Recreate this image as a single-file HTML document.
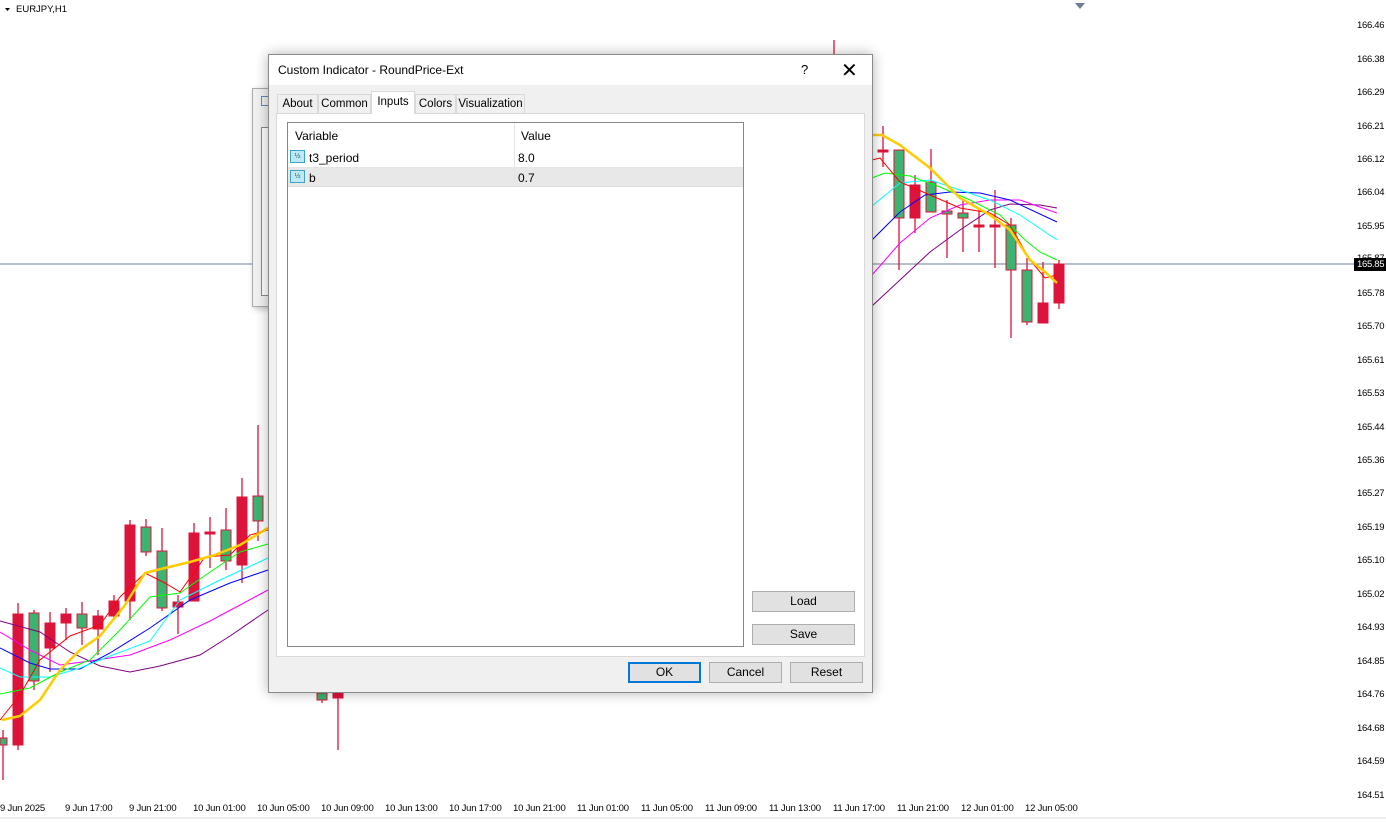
<!DOCTYPE html>
<html><head><meta charset="utf-8"><style>
*{margin:0;padding:0;box-sizing:border-box}
body{width:1386px;height:822px;background:#fff;position:relative;overflow:hidden;font-family:"Liberation Sans",Tahoma,sans-serif}
.ax{position:absolute;left:1357px;font-size:9.5px;letter-spacing:-0.3px;color:#000}
.tm{position:absolute;top:803px;font-size:9.5px;letter-spacing:-0.2px;color:#000;white-space:nowrap}
.abs{position:absolute}
.btn{position:absolute;background:#e1e1e1;border:1px solid #adadad;font-size:12px;text-align:center;line-height:19px;color:#000}
.tab{position:absolute;top:94px;height:19px;border:1px solid #d9d9d9;border-bottom:none;background:#f0f0f0;font-size:11.5px;line-height:18px;text-align:center;color:#000;white-space:nowrap}
.ic{position:absolute;width:15px;height:13px;background:#bfe8f2;border:1px solid #3aa6c4;font-size:7px;line-height:11px;color:#1a5f80;text-align:center}
</style></head><body>
<svg class="abs" style="left:0;top:0" width="1386" height="822">
<line x1="0" y1="264" x2="1356" y2="264" stroke="#6b7f99" stroke-width="1"/>
<line x1="0" y1="818" x2="1386" y2="818" stroke="#ddd"/>
<polygon points="1075,3 1085,3 1080,9" fill="#6b7f99"/>
<polygon points="5,8 10,8 7.5,11" fill="#000"/>
<g stroke="#dc143c" stroke-width="1.3">
<line x1="3" y1="730" x2="3" y2="780"/><line x1="18" y1="603" x2="18" y2="750"/><line x1="34" y1="610" x2="34" y2="690"/><line x1="50" y1="612" x2="50" y2="672"/><line x1="66" y1="608" x2="66" y2="640"/><line x1="82" y1="602" x2="82" y2="645"/><line x1="98" y1="610" x2="98" y2="655"/><line x1="114" y1="595" x2="114" y2="620"/><line x1="130" y1="520" x2="130" y2="620"/><line x1="146" y1="519" x2="146" y2="556"/><line x1="162" y1="528" x2="162" y2="611"/><line x1="178" y1="595" x2="178" y2="634"/><line x1="194" y1="523" x2="194" y2="601"/><line x1="210" y1="517" x2="210" y2="568"/><line x1="226" y1="508" x2="226" y2="570"/><line x1="242" y1="478" x2="242" y2="583"/><line x1="258" y1="425" x2="258" y2="541"/>
<line x1="338" y1="688" x2="338" y2="750"/><line x1="322" y1="690" x2="322" y2="703"/>
<line x1="834" y1="40" x2="834" y2="55"/>
<line x1="883" y1="126" x2="883" y2="167"/><line x1="899" y1="150" x2="899" y2="270"/><line x1="915" y1="175" x2="915" y2="233"/><line x1="931" y1="149" x2="931" y2="212"/><line x1="947" y1="200" x2="947" y2="258"/><line x1="963" y1="200" x2="963" y2="252"/><line x1="979" y1="210" x2="979" y2="252"/><line x1="995" y1="190" x2="995" y2="268"/><line x1="1011" y1="218" x2="1011" y2="338"/><line x1="1027" y1="258" x2="1027" y2="325"/><line x1="1043" y1="262" x2="1043" y2="323"/><line x1="1059" y1="260" x2="1059" y2="309"/>
</g>
<g fill="#dc143c" stroke="#dc143c">
<rect x="13" y="614" width="10" height="131"/><rect x="45" y="623" width="10" height="25"/><rect x="61" y="614" width="10" height="9"/><rect x="93" y="616" width="10" height="13"/><rect x="109" y="601" width="10" height="15"/><rect x="125" y="525" width="10" height="76"/><rect x="173" y="602" width="10" height="5"/><rect x="189" y="533" width="10" height="68"/><rect x="205" y="532" width="10" height="2"/><rect x="237" y="497" width="10" height="68"/><rect x="333" y="688" width="10" height="10"/>
<rect x="878" y="150" width="10" height="2"/><rect x="910" y="185" width="10" height="33"/><rect x="974" y="225" width="10" height="2"/><rect x="990" y="225" width="10" height="2"/><rect x="1038" y="303" width="10" height="20"/><rect x="1054" y="264" width="10" height="39"/>
</g>
<g fill="#3cb371" stroke="#dc143c">
<rect x="0" y="738" width="7" height="7"/><rect x="29" y="613" width="10" height="68"/><rect x="77" y="614" width="10" height="14"/><rect x="141" y="527" width="10" height="25"/><rect x="157" y="551" width="10" height="57"/><rect x="221" y="530" width="10" height="31"/><rect x="253" y="496" width="10" height="25"/><rect x="317" y="693" width="10" height="7"/>
<rect x="894" y="150" width="10" height="68"/><rect x="926" y="182" width="10" height="30"/><rect x="942" y="211" width="10" height="3"/><rect x="958" y="213" width="10" height="5"/><rect x="1006" y="225" width="10" height="45"/><rect x="1022" y="270" width="10" height="52"/>
</g>
<g fill="none" stroke-width="1">
<polyline stroke="#800080" points="0,621 40,632 70,652 100,666 130,672 160,666 200,655 230,636 268,610"/>
<polyline stroke="#ff00ff" points="0,632 30,650 60,665 90,661 130,655 170,640 210,621 240,605 268,590"/>
<polyline stroke="#0000ff" points="0,648 30,663 50,669 80,669 110,653 150,628 190,600 230,583 268,570"/>
<polyline stroke="#00ffff" points="0,668 20,677 50,677 80,668 110,656 150,641 180,600 220,580 268,558"/>
<polyline stroke="#00ff00" points="0,694 30,688 60,672 90,660 120,630 150,597 180,593 210,572 240,552 268,544"/>
<polyline stroke="#ff0000" points="0,720 20,695 40,660 70,636 100,625 120,597 145,573 165,583 180,592 205,557 230,555 250,535 268,530"/>
<polyline stroke="#ffcc00" stroke-width="2.5" points="2,720 20,716 40,700 60,670 80,650 100,636 125,605 145,573 165,568 190,562 215,555 240,545 268,528"/>
<polyline stroke="#800080" points="872,306 900,280 930,252 960,230 990,210 1010,204 1040,205 1057,208"/>
<polyline stroke="#ff00ff" points="872,275 900,243 930,218 960,205 990,200 1020,200 1057,213"/>
<polyline stroke="#0000ff" points="872,240 900,212 925,195 950,192 980,193 1010,200 1057,222"/>
<polyline stroke="#00ffff" points="872,206 900,183 930,180 960,190 990,200 1020,215 1057,240"/>
<polyline stroke="#00ff00" points="872,178 885,173 910,176 940,187 970,200 1000,215 1025,240 1040,252 1057,260"/>
<polyline stroke="#ff0000" points="872,160 880,158 900,182 930,195 960,208 990,213 1010,225 1030,260 1045,278 1057,275"/>
<polyline stroke="#ffcc00" stroke-width="2.5" points="872,135 882,135 900,145 930,168 960,198 990,215 1010,230 1030,260 1045,272 1057,283"/>
</g>
</svg>
<div class="abs" style="left:16px;top:4px;font-size:9.5px">EURJPY,H1</div>
<div class="ax" style="top:20px">166.46</div><div class="ax" style="top:54px">166.38</div><div class="ax" style="top:87px">166.29</div><div class="ax" style="top:121px">166.21</div><div class="ax" style="top:154px">166.12</div><div class="ax" style="top:187px">166.04</div><div class="ax" style="top:221px">165.95</div><div class="ax" style="top:253px">165.87</div>
<div class="abs" style="left:1354px;top:258px;width:32px;height:13px;background:#000;color:#fff;font-size:9.5px;letter-spacing:-0.3px;line-height:13px;padding-left:3px">165.85</div>
<div class="ax" style="top:288px">165.78</div><div class="ax" style="top:321px">165.70</div><div class="ax" style="top:355px">165.61</div><div class="ax" style="top:388px">165.53</div><div class="ax" style="top:422px">165.44</div><div class="ax" style="top:455px">165.36</div><div class="ax" style="top:488px">165.27</div><div class="ax" style="top:522px">165.19</div><div class="ax" style="top:555px">165.10</div><div class="ax" style="top:589px">165.02</div><div class="ax" style="top:622px">164.93</div><div class="ax" style="top:656px">164.85</div><div class="ax" style="top:689px">164.76</div><div class="ax" style="top:723px">164.68</div><div class="ax" style="top:756px">164.59</div><div class="ax" style="top:790px">164.51</div>
<div class="tm" style="left:0">9 Jun 2025</div><div class="tm" style="left:65px">9 Jun 17:00</div><div class="tm" style="left:129px">9 Jun 21:00</div><div class="tm" style="left:193px">10 Jun 01:00</div><div class="tm" style="left:257px">10 Jun 05:00</div><div class="tm" style="left:321px">10 Jun 09:00</div><div class="tm" style="left:385px">10 Jun 13:00</div><div class="tm" style="left:449px">10 Jun 17:00</div><div class="tm" style="left:513px">10 Jun 21:00</div><div class="tm" style="left:577px">11 Jun 01:00</div><div class="tm" style="left:641px">11 Jun 05:00</div><div class="tm" style="left:705px">11 Jun 09:00</div><div class="tm" style="left:769px">11 Jun 13:00</div><div class="tm" style="left:833px">11 Jun 17:00</div><div class="tm" style="left:897px">11 Jun 21:00</div><div class="tm" style="left:961px">12 Jun 01:00</div><div class="tm" style="left:1025px">12 Jun 05:00</div>

<div class="abs" style="left:252px;top:88px;width:30px;height:219px;background:#f0f0f0;border:1px solid #aaa;box-shadow:2px 2px 6px rgba(0,0,0,.25)"></div>
<div class="abs" style="left:261px;top:127px;width:20px;height:169px;border:1px solid #888;background:#fff"></div>
<div class="abs" style="left:261px;top:96px;width:9px;height:10px;border:1px solid #5a8ac6;font-size:6px"></div>

<div class="abs" style="left:268px;top:54px;width:605px;height:639px;background:#f0f0f0;border:1px solid #8a8a8a;box-shadow:0 0 12px rgba(0,0,0,.3)">
<div class="abs" style="left:0;top:0;width:603px;height:30px;background:#fff"></div>
<div class="abs" style="left:9px;top:8px;font-size:12px;color:#000">Custom Indicator - RoundPrice-Ext</div>
<div class="abs" style="left:532px;top:7px;font-size:13px">?</div>
<div class="abs" style="left:572px;top:3px;font-size:20px;font-weight:300">✕</div>
<div class="abs" style="left:7px;top:58px;width:589px;height:544px;background:#fff;border:1px solid #d9d9d9"></div>
</div>
<div class="tab" style="left:277px;width:41px">About</div>
<div class="tab" style="left:318px;width:53px">Common</div>
<div class="tab" style="left:371px;width:44px;top:91px;height:23px;background:#fff;z-index:2;line-height:20px">Inputs</div>
<div class="tab" style="left:415px;width:41px">Colors</div>
<div class="tab" style="left:456px;width:69px">Visualization</div>
<div class="abs" style="left:287px;top:122px;width:457px;height:525px;background:#fff;border:1px solid #828790">
<div class="abs" style="left:0;top:0;width:455px;height:24px;font-size:12px"><span class="abs" style="left:7px;top:6px">Variable</span><span class="abs" style="left:233px;top:6px">Value</span></div>
<div class="abs" style="left:0;top:44px;width:455px;height:1px;background:#e5e5e5"></div>
<div class="abs" style="left:0;top:45px;width:455px;height:19px;background:#e8e8e8;border-bottom:1px solid #ddd"></div>
<div class="ic" style="left:2px;top:27px">½</div><div class="abs" style="left:21px;top:28px;font-size:12px">t3_period</div><div class="abs" style="left:230px;top:28px;font-size:12px">8.0</div>
<div class="ic" style="left:2px;top:47px">½</div><div class="abs" style="left:21px;top:48px;font-size:12px">b</div><div class="abs" style="left:230px;top:48px;font-size:12px">0.7</div>
<div class="abs" style="left:226px;top:0;width:1px;height:64px;background:#e5e5e5"></div>
</div>
<div class="btn" style="left:752px;top:591px;width:103px;height:21px">Load</div>
<div class="btn" style="left:752px;top:624px;width:103px;height:21px">Save</div>
<div class="btn" style="left:628px;top:662px;width:73px;height:21px;border:2px solid #0078d7;line-height:17px">OK</div>
<div class="btn" style="left:709px;top:662px;width:73px;height:21px">Cancel</div>
<div class="btn" style="left:790px;top:662px;width:73px;height:21px">Reset</div>
</body></html>
